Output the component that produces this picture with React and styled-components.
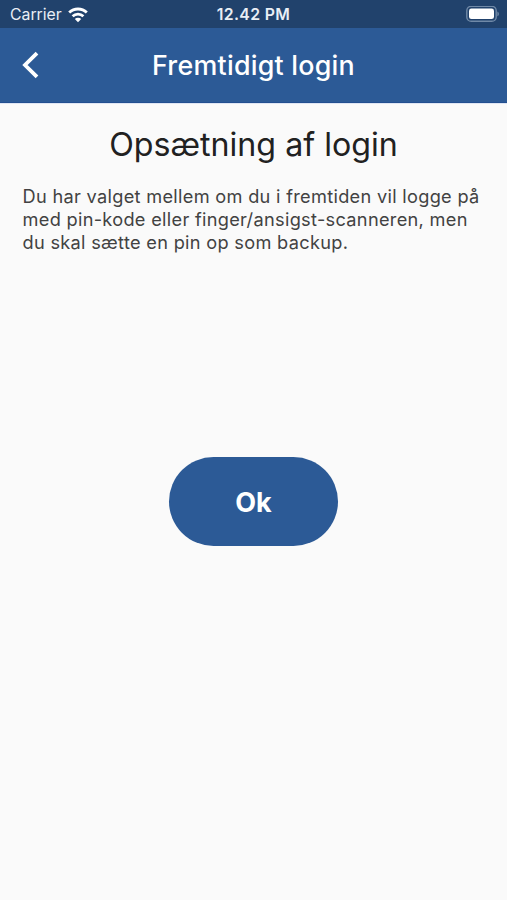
import React from "react";
import styled, { createGlobalStyle } from "styled-components";

const GlobalStyle = createGlobalStyle`
  * { box-sizing: border-box; }
  body { margin: 0; background: #fafafa; }
`;

const Screen = styled.div`
  display: flex;
  flex-direction: column;
  height: 900px;
  width: 507px;
  background: #fafafa;
  font-family: Inter, "Liberation Sans", sans-serif;
  overflow: hidden;
`;

const StatusBar = styled.div`
  display: grid;
  grid-template-columns: 1fr auto 1fr;
  align-items: center;
  height: 28px;
  padding: 1px 7px 0 10px;
  background: #21426c;
  color: #e9eef5;
  font-size: 15.8px;
  line-height: 28px;
`;

const Carrier = styled.div`
  display: flex;
  align-items: center;
  gap: 6px;

  svg {
    margin-top: -1px;
  }
`;

const Clock = styled.div`
  font-weight: 600;
  font-size: 15.8px;
  letter-spacing: 0.35px;
  margin-right: 3px;
`;

const BatteryIcon = styled.svg`
  justify-self: end;
  margin-top: -1px;
`;

const NavBar = styled.header`
  display: grid;
  grid-template-columns: 60px 1fr 60px;
  align-items: center;
  height: 75px;
  flex: none;
  background: #2c5a96;
  border-bottom: 1px solid #234f90;
  color: #fff;
  box-shadow: 0 1px 0 #dfe6f3;
`;

const BackButton = styled.button`
  display: flex;
  align-items: center;
  height: 100%;
  padding: 0 0 0 20px;
  border: 0;
  background: none;
  color: inherit;
`;

const NavTitle = styled.h1`
  margin: 0;
  text-align: center;
  font-size: 26.8px;
  font-weight: 550;
  line-height: 32px;
  letter-spacing: 0.25px;
  white-space: nowrap;
`;

const Content = styled.main`
  display: flex;
  flex-direction: column;
  align-items: center;
  padding: 22px 22px 0;
`;

const Heading = styled.h2`
  margin: 0;
  color: #212121;
  font-size: 32.2px;
  font-weight: 400;
  line-height: 40px;
  white-space: nowrap;
`;

const Description = styled.p`
  align-self: stretch;
  margin: 20px 0 0 0.5px;
  color: #424242;
  font-size: 18.2px;
  line-height: 23px;
  letter-spacing: 0.3px;
  white-space: nowrap;
`;

const OkButton = styled.button`
  width: 169px;
  height: 89.5px;
  margin-top: 202.6px;
  padding: 2px 0 0;
  border: 0;
  border-radius: 45px;
  background: #2c5a96;
  color: #fff;
  font-family: inherit;
  font-size: 27px;
  font-weight: 700;
`;

export default function App() {
  return (
    <Screen>
      <GlobalStyle />
      <StatusBar>
        <Carrier>
          Carrier
          <svg width="20" height="16" viewBox="0 0 20 16" fill="none" stroke="#fff" strokeWidth="2.8">
            <path d="M1.2 5.6a12.6 12.6 0 0 1 17.6 0" />
            <path d="M4.6 9.2a7.8 7.8 0 0 1 10.8 0" />
            <path d="M10 15.2 6.8 12a4.6 4.6 0 0 1 6.4 0z" fill="#fff" stroke="none" />
          </svg>
        </Carrier>
        <Clock>12.42 PM</Clock>
        <BatteryIcon width="34" height="17" viewBox="0 0 34 17">
          <rect x="0.8" y="0.3" width="29.4" height="15" rx="4.4" fill="none" stroke="#7089a7" strokeWidth="1.4" />
          <rect x="3" y="2.5" width="25" height="10.6" rx="2.4" fill="#fff" />
          <path d="M31.4 5.5v4.8c2-.8 2-4 0-4.8z" fill="#7089a7" />
        </BatteryIcon>
      </StatusBar>
      <NavBar>
        <BackButton aria-label="Tilbage">
          <svg width="20" height="28" viewBox="0 0 20 28" fill="none" stroke="currentColor" strokeWidth="3.8">
            <path d="M17 2.2 5 14l12 11.8" />
          </svg>
        </BackButton>
        <NavTitle>Fremtidigt login</NavTitle>
      </NavBar>
      <Content>
        <Heading>Opsætning af login</Heading>
        <Description>
          Du har valget mellem om du i fremtiden vil logge på
          <br />
          med pin-kode eller finger/ansigst-scanneren, men
          <br />
          du skal sætte en pin op som backup.
        </Description>
        <OkButton>Ok</OkButton>
      </Content>
    </Screen>
  );
}
